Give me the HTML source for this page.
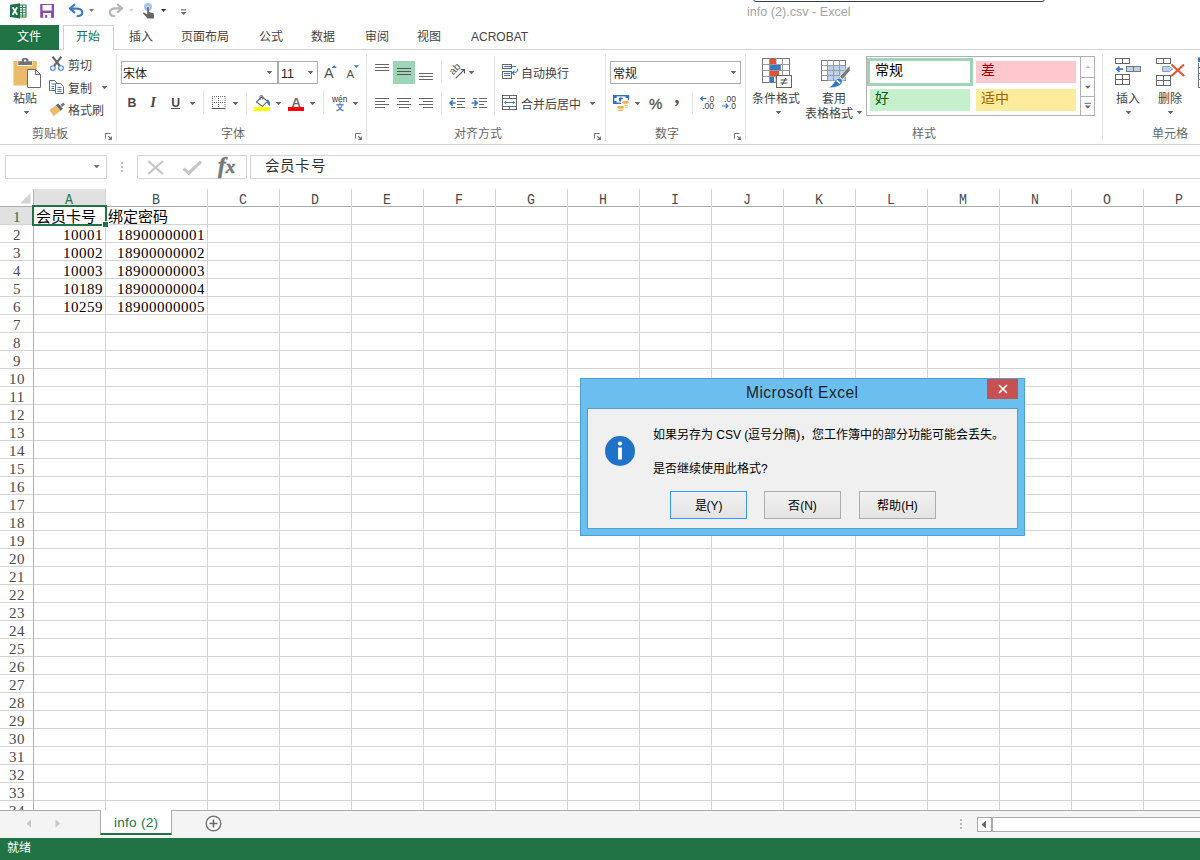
<!DOCTYPE html>
<html lang="zh-CN">
<head>
<meta charset="utf-8">
<title>Excel</title>
<style>
*{box-sizing:border-box;margin:0;padding:0}
html,body{width:1200px;height:860px;overflow:hidden;background:#fff}
body{font-family:"Liberation Sans",sans-serif;font-size:12px;color:#444;position:relative}
.a{position:absolute}
.t{position:absolute;white-space:nowrap;line-height:1}
svg{position:absolute;overflow:visible}
/* title */
#title{left:747px;top:6px;font-size:12.6px;color:#a4a4a4}
#frag{left:753px;top:-12px;width:292px;height:14px;border:1.4px solid #353e48;border-radius:0 0 3px 3px;background:#fff}
/* tabs */
#filetab{left:0;top:25px;width:59px;height:25px;background:#217346}
.tab{font-size:12px;top:31px;color:#444}
#hometab{left:63px;top:25px;width:51px;height:25px;border:1px solid #d0d0d0;border-bottom:none;background:#fff}
#ribline{left:0;top:49px;width:1200px;height:1px;background:#d4d4d4}
#ribbot{left:0;top:144px;width:1200px;height:1px;background:#d4d4d4}
.gl{font-size:12px;color:#666;top:128px}
.sep{width:1px;background:#e1e1e1;top:54px;height:87px}
.rt{font-size:12px;color:#444;margin-top:1px}
.dd{width:5.8px;height:3.3px;margin-left:-.4px;background:#666;clip-path:polygon(0 0,100% 0,50% 100%)}
.box{border:1px solid #ababab;background:#fff}
/* formula bar */
.fb{top:155px;height:24px;border:1px solid #d4d4d4;background:#fff}
/* grid */
#grid{left:0;top:186px;width:1200px;height:624px;background:#fff;overflow:hidden}
.vl{position:absolute;top:3px;width:1px;height:621px;background:#d4d4d4}
.hl{position:absolute;left:0;height:1px;width:1200px;background:#d4d4d4}
.ch{position:absolute;font-family:"Liberation Mono",monospace;font-size:15.4px;line-height:15px;color:#4a4a4a;text-align:center;transform:scaleX(.86)}
.rh{position:absolute;left:0;width:34px;font-family:"Liberation Serif",serif;font-size:15px;line-height:15px;color:#4a4a4a;text-align:center;letter-spacing:.5px}
.c{position:absolute;font-family:"Liberation Serif",serif;font-size:15px;line-height:15px;color:#000;letter-spacing:.5px;white-space:nowrap}
/* bottom */
#tabbar{left:0;top:810px;width:1200px;height:28px;background:#f4f4f4;border-top:1px solid #ababab}
#status{left:0;top:838px;width:1200px;height:22px;background:#217346}
/* dialog */
#dlg{left:580px;top:378px;width:445px;height:158px;background:#6bbfef;border:1px solid #4a9fd6}
#dlgin{left:587px;top:408px;width:431px;height:121px;background:#f0f0f0;border:1px solid #4f9fd3}
.btn{top:491px;width:77px;height:28px;border:1px solid #acacac;background:linear-gradient(#f1f1f1,#e4e4e4);font-size:12px;color:#000;text-align:center;line-height:26px;padding-top:1px}
.dt{font-size:12px;color:#000}
</style>
</head>
<body>
<!-- TITLE BAR -->
<div class="a" id="frag"></div>
<div class="t" id="title">info (2).csv - Excel</div>
<!--QAT-->
<svg style="left:0;top:0" width="200" height="25" viewBox="0 0 200 25">
<!-- excel -->
<rect x="18.5" y="5" width="7.5" height="12" fill="#fff" stroke="#217346" stroke-width="1"/>
<path d="M19 7.5H26M19 10H26M19 12.5H26M19 15H26M22.5 5V17" stroke="#217346" stroke-width="0.9" fill="none"/>
<path d="M10 4.8L20 3.2V18.6L10 17Z" fill="#1e7145"/>
<path d="M12.6 7.3L17.2 14.8M17.2 7.3L12.6 14.8" stroke="#fff" stroke-width="1.7" fill="none"/>
<!-- save -->
<rect x="40.2" y="4" width="13.8" height="13.8" fill="#8a4ab0"/>
<rect x="42.5" y="5" width="9.2" height="5.6" fill="#fff"/>
<rect x="43.2" y="13" width="7.8" height="4.8" fill="#fff"/>
<rect x="45.2" y="14.8" width="2" height="3" fill="#8a4ab0"/>
<!-- undo -->
<path d="M71.5 8.6H77.5C81.2 8.6 82.3 11 82.3 12.6C82.3 14.6 80.6 16 77.6 16.1" stroke="#3b78c4" stroke-width="2.2" fill="none" stroke-linecap="round"/>
<path d="M74.3 4.8L70 8.6L74.3 12.3" stroke="#3b78c4" stroke-width="2.2" fill="none" stroke-linecap="round" stroke-linejoin="round"/>
<path d="M89 9H94.2L91.6 11.8Z" fill="#777"/>
<!-- redo -->
<path d="M120.5 8.4H114.6C111 8.4 109.9 10.8 109.9 12.4C109.9 14.4 111.6 15.9 114.4 16" stroke="#b5b5b5" stroke-width="2.2" fill="none" stroke-linecap="round"/>
<path d="M117.8 4.6L122.1 8.4L117.8 12.1" stroke="#b5b5b5" stroke-width="2.2" fill="none" stroke-linecap="round" stroke-linejoin="round"/>
<path d="M129 9H133.8L131.4 11.6Z" fill="#c9c9c9"/>
<!-- touch -->
<circle cx="148" cy="7" r="4" fill="#a3c4e4"/><circle cx="148" cy="7.2" r="1.6" fill="#d6e4f3"/>
<path d="M147.2 7.4C147.2 6.4 148.9 6.4 148.9 7.4V12L152.6 13C153.7 13.4 154 14 154 15V18.6H147.6L143.2 13.8C142.6 13 143.6 12.2 144.5 12.8L147.2 14.6Z" fill="#666"/>
<path d="M161 9H166.2L163.6 11.9Z" fill="#333"/>
<!-- customize -->
<rect x="181" y="9.3" width="5.2" height="1.1" fill="#666"/>
<path d="M180.8 12H186.4L183.6 15.1Z" fill="#666"/>
</svg>
<!--/QAT-->
<!-- TABS -->
<div class="a" id="ribline"></div>
<div class="a" id="filetab"></div>
<div class="a" id="hometab"></div>
<div class="t tab" style="left:17px;color:#fff">文件</div>
<div class="t tab" style="left:76px;color:#217346">开始</div>
<div class="t tab" style="left:129px">插入</div>
<div class="t tab" style="left:181px">页面布局</div>
<div class="t tab" style="left:259px">公式</div>
<div class="t tab" style="left:311px">数据</div>
<div class="t tab" style="left:365px">审阅</div>
<div class="t tab" style="left:417px">视图</div>
<div class="t tab" style="left:471px">ACROBAT</div>
<!-- RIBBON -->
<div class="a" id="ribbot"></div>
<!--RIBBON-CONTENT-->
<!-- group separators -->
<div class="a sep" style="left:116px"></div>
<div class="a sep" style="left:366px"></div>
<div class="a sep" style="left:605px"></div>
<div class="a sep" style="left:745px"></div>
<div class="a sep" style="left:1102px"></div>
<!-- inner separators -->
<div class="a sep" style="left:203px;top:91px;height:23px"></div>
<div class="a sep" style="left:246px;top:91px;height:23px"></div>
<div class="a sep" style="left:323px;top:91px;height:23px"></div>
<div class="a sep" style="left:441px;top:60px;height:23px"></div>
<div class="a sep" style="left:441px;top:91px;height:23px"></div>
<div class="a sep" style="left:494px;top:56px;height:60px"></div>
<div class="a sep" style="left:692px;top:92px;height:22px"></div>
<!-- group labels -->
<div class="t gl" style="left:32px">剪贴板</div>
<div class="t gl" style="left:221px">字体</div>
<div class="t gl" style="left:454px">对齐方式</div>
<div class="t gl" style="left:655px">数字</div>
<div class="t gl" style="left:912px">样式</div>
<div class="t gl" style="left:1152px">单元格</div>
<!-- clipboard -->
<div class="t rt" style="left:13px;top:92px">粘贴</div>
<div class="t rt" style="left:68px;top:59px">剪切</div>
<div class="t rt" style="left:68px;top:82px">复制</div>
<div class="t rt" style="left:68px;top:104px">格式刷</div>
<div class="a dd" style="left:24px;top:111px"></div>
<div class="a dd" style="left:102px;top:86px"></div>
<!-- font -->
<div class="a box" style="left:121px;top:61px;width:157px;height:23px"></div>
<div class="a box" style="left:278px;top:61px;width:40px;height:23px"></div>
<div class="t rt" style="left:123px;top:67px;color:#222">宋体</div>
<div class="t rt" style="left:281px;top:67px;color:#222;font-size:12.5px">11</div>
<div class="a dd" style="left:267px;top:71px"></div>
<div class="a dd" style="left:308px;top:71px"></div>
<div class="t" style="left:324px;top:66px;font-size:14.4px;color:#505050">A</div>
<div class="t" style="left:346.6px;top:68.6px;font-size:11.4px;color:#505050">A</div>
<div class="t" style="left:127.4px;top:96.9px;font-size:12.3px;font-weight:bold;color:#4a4a4a">B</div>
<div class="t" style="left:150.2px;top:95.3px;font-size:14.6px;font-weight:bold;font-style:italic;color:#4a4a4a;font-family:'Liberation Serif',serif">I</div>
<div class="t" style="left:171.2px;top:96.9px;font-size:12.3px;font-weight:bold;color:#4a4a4a">U</div>
<div class="a" style="left:171px;top:108px;width:9px;height:1px;background:#555"></div>
<div class="a dd" style="left:190px;top:102px"></div>
<div class="a dd" style="left:233px;top:102px"></div>
<div class="a dd" style="left:276px;top:102px"></div>
<div class="a dd" style="left:310px;top:102px"></div>
<div class="a dd" style="left:353px;top:102px"></div>
<div class="a" style="left:254px;top:107px;width:16px;height:4px;background:#ffff00"></div>
<div class="a" style="left:288px;top:107px;width:16px;height:4px;background:#ff0000"></div>
<div class="t" style="left:291.6px;top:95.6px;font-size:13px;font-weight:bold;color:#6a6a6a">A</div>
<div class="t" style="left:332px;top:95px;font-size:8.4px;color:#333">wén</div>
<div class="t" style="left:336px;top:103.6px;font-size:7.8px;color:#3b78c4;font-weight:bold">文</div>
<!-- alignment -->
<div class="a" style="left:393px;top:61px;width:22px;height:23px;background:#9fd5b7"></div>
<div class="t rt" style="left:521px;top:67px">自动换行</div>
<div class="t rt" style="left:521px;top:98px">合并后居中</div>
<div class="a dd" style="left:469px;top:71px"></div>
<div class="a dd" style="left:590px;top:102px"></div>
<!-- number -->
<div class="a box" style="left:610px;top:61px;width:131px;height:23px"></div>
<div class="t rt" style="left:613px;top:67px;color:#222">常规</div>
<div class="a dd" style="left:731px;top:71px"></div>
<div class="a dd" style="left:635px;top:102px"></div>
<div class="t" style="left:649px;top:96px;font-size:15px;color:#555;-webkit-text-stroke:.35px #555">%</div>
<div class="t" style="left:674.4px;top:85.6px;font-size:20px;font-weight:bold;color:#555;font-family:'Liberation Serif',serif">,</div>
<!-- styles -->
<div class="t rt" style="left:752px;top:92px">条件格式</div>
<div class="a dd" style="left:776px;top:111px"></div>
<div class="t rt" style="left:822px;top:92px">套用</div>
<div class="t rt" style="left:805px;top:107px">表格格式</div>
<div class="a dd" style="left:857px;top:111px"></div>
<div class="a" style="left:866px;top:56px;width:229px;height:60px;border:1px solid #b0b0b0;background:#fff"></div>
<div class="a" style="left:867px;top:58px;width:106px;height:28px;border:3px solid #9fd5b7;background:#fff"></div>
<div class="a" style="left:976px;top:61px;width:100px;height:22px;background:#ffc7ce"></div>
<div class="a" style="left:870px;top:89px;width:100px;height:22px;background:#c6efce"></div>
<div class="a" style="left:976px;top:89px;width:100px;height:22px;background:#ffeb9c"></div>
<div class="t" style="left:875px;top:63px;font-size:14px;color:#000">常规</div>
<div class="t" style="left:981px;top:63px;font-size:14px;color:#9c0006">差</div>
<div class="t" style="left:875px;top:91px;font-size:14px;color:#006100">好</div>
<div class="t" style="left:981px;top:91px;font-size:14px;color:#9c6500">适中</div>
<div class="a" style="left:1080px;top:56px;width:15px;height:60px;border:1px solid #b0b0b0;background:#fff"></div>
<div class="a" style="left:1080px;top:77px;width:15px;height:20px;border:1px solid #b0b0b0;border-left:none;border-right:none"></div>
<!-- cells -->
<div class="t rt" style="left:1116px;top:92px">插入</div>
<div class="t rt" style="left:1158px;top:92px">删除</div>
<div class="a dd" style="left:1126px;top:111px"></div>
<div class="a dd" style="left:1168px;top:111px"></div>
<!-- icons -->
<svg id="ico" style="left:0;top:0" width="1200" height="150" viewBox="0 0 1200 150">
<!--ICONS-->
<g id="paste">
<rect x="13.4" y="61" width="23.5" height="24.6" rx="0.8" fill="#eabb6b"/>
<rect x="17.6" y="60.6" width="14.8" height="5.4" fill="#fff"/>
<path d="M18.2 65V61.2H21.8V59.6C21.8 58.5 23 58 25.1 58C27.2 58 28.4 58.5 28.4 59.6V61.2H32V65Z" fill="#737373"/>
<rect x="24" y="59.7" width="2.2" height="1.9" fill="#fff"/>
<path d="M27.5 69.5H35.5L40.5 74.5V87.5H27.5Z" fill="#fff" stroke="#6a6a6a" stroke-width="1"/>
<path d="M35.5 69.5V74.5H40.5" fill="none" stroke="#6a6a6a" stroke-width="1"/>
</g>
<g id="cut">
<path d="M52.5 56.6L59.9 66M61.4 56.6L54 66" stroke="#666" stroke-width="2.2" fill="none"/>
<circle cx="52.9" cy="68" r="2.3" fill="#fff" stroke="#4a86cf" stroke-width="1.15"/>
<circle cx="61" cy="68" r="2.3" fill="#fff" stroke="#4a86cf" stroke-width="1.15"/>
</g>
<g id="copy">
<path d="M49.5 80.5H54.5L57.5 83.5V90.5H49.5Z" fill="#fff" stroke="#6a6a6a" stroke-width="1"/>
<path d="M51.5 84H55M51.5 86.5H54M51.5 88.5H54" stroke="#3b78c4" stroke-width="1" fill="none"/>
<path d="M55.5 83.5H60.5L63.5 86.5V93.5H55.5Z" fill="#fff" stroke="#6a6a6a" stroke-width="1"/>
<path d="M57.5 87.5H61.5M57.5 89.5H61.5M57.5 91.5H61.5" stroke="#3b78c4" stroke-width="1" fill="none"/>
</g>
<g id="painter">
<path d="M49.5 110L55.5 105.5L60.5 111L53.5 116Z" fill="#eabb6b"/>
<path d="M55.8 105.2L58.2 103.4L63 108.8L60.6 110.8Z" fill="#666"/>
<path d="M60.3 105L63.3 102.6L65 104.4L62 107Z" fill="#7a7a7a"/>
</g>
<g id="launchers">
<path d="M105.5 138.6V133.5H110.6" fill="none" stroke="#6e6e6e" stroke-width="1"/><path d="M111.9 136.1V139.9H108.1Z" fill="#6e6e6e" stroke="none"/><path d="M108.2 136.2L110 138" stroke="#6e6e6e" stroke-width="1.1" fill="none"/>
<path d="M355.5 138.6V133.5H360.6" fill="none" stroke="#6e6e6e" stroke-width="1"/><path d="M361.9 136.1V139.9H358.1Z" fill="#6e6e6e" stroke="none"/><path d="M358.2 136.2L360 138" stroke="#6e6e6e" stroke-width="1.1" fill="none"/>
<path d="M594.5 138.6V133.5H599.6" fill="none" stroke="#6e6e6e" stroke-width="1"/><path d="M600.9 136.1V139.9H597.1Z" fill="#6e6e6e" stroke="none"/><path d="M597.2 136.2L599 138" stroke="#6e6e6e" stroke-width="1.1" fill="none"/>
<path d="M734.5 138.6V133.5H739.6" fill="none" stroke="#6e6e6e" stroke-width="1"/><path d="M740.9 136.1V139.9H737.1Z" fill="#6e6e6e" stroke="none"/><path d="M737.2 136.2L739 138" stroke="#6e6e6e" stroke-width="1.1" fill="none"/>
</g>
<g id="growshrink" fill="#3b78c4">
<path d="M331.6 68L334.2 65.2L336.8 68Z"/>
<path d="M353.8 65.2H359L356.4 68Z"/>
</g>
<g id="border" stroke="#666" stroke-width="1" fill="none">
<path d="M212 96.5H225.5M212 102.5H225.5" stroke-dasharray="1 1"/>
<path d="M212.5 96V108M218.5 96V108M225 96V108" stroke-dasharray="1 1"/>
<path d="M211.8 108.5H225.5" stroke="#555"/>
</g>
<g id="fill">
<path d="M256.4 102L261.6 96.8L267.8 101.2L262.4 106.4Z" fill="#fff" stroke="#666" stroke-width="1.1" stroke-linejoin="round"/>
<path d="M260 100V96.2C260 95.2 262.8 95.2 262.8 96.2V99.6" fill="none" stroke="#666" stroke-width="1"/>
<path d="M267.4 99.2C269.6 100.4 270.3 102.6 270 106C268.4 104.8 267.2 103.6 267 102.2Z" fill="#3b78c4"/>
</g>
<g id="aligns" stroke="#666" stroke-width="1" fill="none">
<path d="M375 64.5H389M375 67.5H389M375 70.5H389"/>
<path d="M397 68.5H411M397 71.5H411M397 74.5H411" stroke="#555"/>
<path d="M419 73.5H433M419 76.5H433M419 79.5H433"/>
<path d="M375 98.5H389M375 101.5H385M375 104.5H389M375 107.5H385"/>
<path d="M397 98.5H411M399 101.5H409M397 104.5H411M399 107.5H409"/>
<path d="M419 98.5H433M423 101.5H433M419 104.5H433M423 107.5H433"/>
<path d="M451 98.5H455M457 98.5H465M457 101.5H465M457 104.5H462M451 107.5H455M457 107.5H465"/>
<path d="M473 98.5H477M479 98.5H487M479 101.5H487M479 104.5H484M473 107.5H477M479 107.5H487"/>
</g>
<g id="indentarrows" stroke="#3b78c4" stroke-width="1.6" fill="none">
<path d="M455.6 103H450.2M452.8 100.4L450 103L452.8 105.6"/>
<path d="M471.6 103H477M474.4 100.4L477.2 103L474.4 105.6"/>
</g>
<g id="orient">
<text x="0" y="0" transform="translate(453.2 75.6) rotate(-47)" font-family="Liberation Sans, sans-serif" font-size="10.5" fill="#555">ab</text>
<path d="M455.6 78.3L464.2 69.8M460.6 69.6H464.5V73.4" stroke="#555" stroke-width="1.1" fill="none"/>
</g>
<g id="wrap" fill="none">
<rect x="502.5" y="64.5" width="9" height="4" stroke="#666"/>
<path d="M504 66.5H516" stroke="#3b78c4"/>
<rect x="502.5" y="71.5" width="9" height="7" stroke="#666" fill="#fff"/>
<path d="M504 73.5H510M504 75.5H510" stroke="#3b78c4"/>
<path d="M517.5 68.6C517.8 71.6 516.4 72.8 512.6 72.8M514.6 70.6L512.4 72.8L514.6 75" stroke="#3b78c4" stroke-width="1.1"/>
</g>
<g id="merge" fill="none">
<rect x="502.5" y="95.5" width="14" height="14" stroke="#666"/>
<path d="M502.5 98.5H516.5M502.5 106.5H516.5M509.5 95.5V98.5M509.5 106.5V109.5" stroke="#666"/>
<path d="M504.6 102.5H514.4M506.2 101L504.6 102.5L506.2 104M512.8 101L514.4 102.5L512.8 104" stroke="#3b78c4" stroke-width="1"/>
</g>
<g id="currency">
<rect x="613.7" y="95.7" width="14.8" height="7.6" fill="#fff" stroke="#2f6fbd" stroke-width="1.4"/>
<rect x="614" y="96" width="2.6" height="2" fill="#2f6fbd"/><rect x="625.6" y="96" width="2.6" height="2" fill="#2f6fbd"/><rect x="614" y="101" width="2.6" height="2" fill="#2f6fbd"/>
<circle cx="620.9" cy="99.4" r="2.25" fill="#2f6fbd"/>
<path d="M621.2 99.2L623.6 99.2L623.6 102L621.2 102Z" fill="#fff"/>
<rect x="621.2" y="100.2" width="8.6" height="4.2" fill="#fff"/>
<rect x="622.2" y="101" width="6.6" height="2.7" rx="1.35" fill="#eeb350"/>
<rect x="624.3" y="105" width="3.7" height=".8" fill="#d8ba55"/>
<rect x="624.6" y="107" width="3.4" height=".8" fill="#d8ba55"/>
<rect x="617" y="106" width="6.8" height="2.7" rx="1.35" fill="#eeb350"/>
<rect x="617.6" y="109.2" width="6" height=".6" fill="#e6c680"/>
<rect x="618" y="110.1" width="4.8" height=".9" fill="#eeb350"/>
</g>
<g id="decimals" font-family="Liberation Sans, sans-serif" font-size="8.6" fill="#3c3c3c">
<text x="707" y="101.7">.0</text>
<text x="702.2" y="109.1">.00</text>
<text x="724" y="101.7">.00</text>
<text x="728.9" y="109.1">.0</text>
<path d="M706.4 98.6H700.8M703 96.4L700.6 98.6L703 100.8" stroke="#3b78c4" stroke-width="1.2" fill="none"/>
<path d="M722 106H727.8M725.6 103.8L728 106L725.6 108.2" stroke="#3b78c4" stroke-width="1.2" fill="none"/>
</g>
<g id="condfmt">
<rect x="762.5" y="58.5" width="27" height="24" fill="#fff" stroke="#777"/>
<path d="M769.5 58.5V82.5M776 58.5V82.5M782.5 58.5V82.5M762.5 64.5H789.5M762.5 70.5H789.5M762.5 76.5H789.5" stroke="#9a9a9a" fill="none"/>
<rect x="770" y="59" width="6" height="5" fill="#e0532f"/>
<rect x="770" y="65" width="10.8" height="5" fill="#3b78c4"/>
<rect x="770" y="71" width="9" height="5" fill="#e0532f"/>
<rect x="770" y="77" width="4" height="5" fill="#3b78c4"/>
<rect x="776.5" y="75.5" width="15" height="12" fill="#fff" stroke="#666"/>
<path d="M780.6 80H787.4M780.6 83H787.4M786 78L782 85" stroke="#444" stroke-width="1" fill="none"/>
</g>
<g id="tblfmt">
<rect x="821.5" y="60.5" width="24" height="20" fill="#fff" stroke="#777"/>
<rect x="828" y="66" width="17.5" height="14.5" fill="#b9d3ee"/>
<path d="M827.5 60.5V80.5M833.5 60.5V80.5M839.5 60.5V80.5M821.5 65.5H845.5M821.5 70.5H845.5M821.5 75.5H845.5" stroke="#9a9a9a" fill="none"/>
<path d="M850 65.6L850.2 70.6L842.6 79.4L839.6 76.8L847.6 67.6Z" fill="#777" stroke="#fff" stroke-width=".8"/>
<path d="M839.2 78.2C841.4 78.2 842.8 80.2 842.2 82.2C841.2 85.6 837 87.8 828 87.8C832.4 86 833.8 82.4 835.4 80.2C836.4 78.8 837.8 78.2 839.2 78.2Z" fill="#3b78c4" stroke="#fff" stroke-width=".6"/>
<path d="M836.6 80.4L840.2 83.4" stroke="#fff" stroke-width="1.4"/>
</g>
<g id="galleryarrows">
<path d="M1085 68L1087.8 65.2L1090.6 68Z" fill="#c8c8c8"/>
<path d="M1085 85.8H1090.6L1087.8 88.8Z" fill="#666"/>
<rect x="1084.6" y="102.8" width="6.4" height="1" fill="#666"/>
<path d="M1085 105.6H1090.6L1087.8 108.8Z" fill="#666"/>
</g>
<g id="insert" fill="none">
<rect x="1115.5" y="58.5" width="14" height="5" stroke="#666"/>
<path d="M1122.5 58.5V63.5" stroke="#666"/>
<rect x="1126.5" y="66.5" width="14" height="5" fill="#b9d3ee" stroke="#777"/>
<path d="M1133.5 66.5V71.5" stroke="#777"/>
<path d="M1123 69.2H1117M1119.6 66.6L1116.8 69.2L1119.6 71.8" stroke="#3b78c4" stroke-width="1.8"/>
<rect x="1115.5" y="74.5" width="14" height="10" stroke="#666"/>
<path d="M1122.5 74.5V84.5M1115.5 79.5H1129.5" stroke="#666"/>
</g>
<g id="delete" fill="none">
<rect x="1156.5" y="58.5" width="14" height="5" stroke="#666"/>
<path d="M1163.5 58.5V63.5" stroke="#666"/>
<path d="M1162.5 66.5H1169.5L1172.5 69L1169.5 71.5H1162.5Z" fill="#b9d3ee" stroke="#8a9db4"/>
<rect x="1156.5" y="75.5" width="14" height="10" stroke="#666"/>
<path d="M1163.5 75.5V85.5M1156.5 80.5H1170.5" stroke="#666"/>
<path d="M1171.4 64.4L1184.2 76M1184 64.6L1171.2 76.2" stroke="#e0532f" stroke-width="2"/>
</g>
<g id="partial">
<rect x="1198" y="57.5" width="2" height="4.5" fill="#3b78c4"/>
<path d="M1198.5 63V88M1198.5 67.5H1200M1198.5 73.5H1200M1198.5 79.5H1200M1198.5 87.5H1200" stroke="#777" fill="none"/>
</g>
<!--/ICONS-->
</svg>
<!--/RIBBON-CONTENT-->
<!-- FORMULA BAR -->
<!--FORMULA-->
<div class="a fb" style="left:5px;width:102px"></div>
<div class="a dd" style="left:93.6px;top:164.6px;width:7px;height:3.8px;background:#777"></div>
<div class="a" style="left:121px;top:162px;width:2px;height:2px;background:#bbb;box-shadow:0 4px 0 #bbb,0 8px 0 #bbb"></div>
<div class="a fb" style="left:137px;width:110px"></div>
<svg style="left:147px;top:160px" width="18" height="15" viewBox="0 0 18 15"><path d="M1.2 1L16 14M16 1L1.2 14" stroke="#c6c6c6" stroke-width="2.3" fill="none"/></svg>
<svg style="left:182px;top:160px" width="20" height="15" viewBox="0 0 20 15"><path d="M1.5 8.6L6.8 13.2L19 1.6" stroke="#c6c6c6" stroke-width="3.2" fill="none"/></svg>
<div class="t" style="left:218px;top:154px;font-family:'Liberation Serif',serif;font-style:italic;font-weight:bold;font-size:23px;color:#777;-webkit-text-stroke:.5px #777;letter-spacing:0">f<span style="font-size:19px;letter-spacing:0">x</span></div>
<div class="a fb" style="left:250px;width:960px"></div>
<div class="t" style="left:265px;top:159px;font-size:14.6px;color:#333;letter-spacing:0.2px">会员卡号</div>
<!--/FORMULA-->
<!-- GRID -->
<div class="a" id="grid">
<!--GRID-CONTENT-->
<div class="a" style="left:34px;top:3px;width:71px;height:17px;background:#e1e1e1"></div>
<div class="a" style="left:0;top:21px;width:33px;height:17px;background:#e1e1e1"></div>
<div class="hl" style="top:20px;background:#ababab"></div>
<div class="hl" style="top:38px;background:#d4d4d4"></div>
<div class="hl" style="top:56px;background:#d4d4d4"></div>
<div class="hl" style="top:74px;background:#d4d4d4"></div>
<div class="hl" style="top:92px;background:#d4d4d4"></div>
<div class="hl" style="top:110px;background:#d4d4d4"></div>
<div class="hl" style="top:128px;background:#d4d4d4"></div>
<div class="hl" style="top:146px;background:#d4d4d4"></div>
<div class="hl" style="top:164px;background:#d4d4d4"></div>
<div class="hl" style="top:182px;background:#d4d4d4"></div>
<div class="hl" style="top:200px;background:#d4d4d4"></div>
<div class="hl" style="top:218px;background:#d4d4d4"></div>
<div class="hl" style="top:236px;background:#d4d4d4"></div>
<div class="hl" style="top:254px;background:#d4d4d4"></div>
<div class="hl" style="top:272px;background:#d4d4d4"></div>
<div class="hl" style="top:290px;background:#d4d4d4"></div>
<div class="hl" style="top:308px;background:#d4d4d4"></div>
<div class="hl" style="top:326px;background:#d4d4d4"></div>
<div class="hl" style="top:344px;background:#d4d4d4"></div>
<div class="hl" style="top:362px;background:#d4d4d4"></div>
<div class="hl" style="top:380px;background:#d4d4d4"></div>
<div class="hl" style="top:398px;background:#d4d4d4"></div>
<div class="hl" style="top:416px;background:#d4d4d4"></div>
<div class="hl" style="top:434px;background:#d4d4d4"></div>
<div class="hl" style="top:452px;background:#d4d4d4"></div>
<div class="hl" style="top:470px;background:#d4d4d4"></div>
<div class="hl" style="top:488px;background:#d4d4d4"></div>
<div class="hl" style="top:506px;background:#d4d4d4"></div>
<div class="hl" style="top:524px;background:#d4d4d4"></div>
<div class="hl" style="top:542px;background:#d4d4d4"></div>
<div class="hl" style="top:560px;background:#d4d4d4"></div>
<div class="hl" style="top:578px;background:#d4d4d4"></div>
<div class="hl" style="top:596px;background:#d4d4d4"></div>
<div class="hl" style="top:614px;background:#d4d4d4"></div>
<div class="vl" style="left:33px;background:#b4b4b4"></div>
<div class="vl" style="left:105px;background:#d4d4d4"></div>
<div class="vl" style="left:207px;background:#d4d4d4"></div>
<div class="vl" style="left:279px;background:#d4d4d4"></div>
<div class="vl" style="left:351px;background:#d4d4d4"></div>
<div class="vl" style="left:423px;background:#d4d4d4"></div>
<div class="vl" style="left:495px;background:#d4d4d4"></div>
<div class="vl" style="left:567px;background:#d4d4d4"></div>
<div class="vl" style="left:639px;background:#d4d4d4"></div>
<div class="vl" style="left:711px;background:#d4d4d4"></div>
<div class="vl" style="left:783px;background:#d4d4d4"></div>
<div class="vl" style="left:855px;background:#d4d4d4"></div>
<div class="vl" style="left:927px;background:#d4d4d4"></div>
<div class="vl" style="left:999px;background:#d4d4d4"></div>
<div class="vl" style="left:1071px;background:#d4d4d4"></div>
<div class="vl" style="left:1143px;background:#d4d4d4"></div>
<div class="ch" style="left:33px;top:7px;width:72px;color:#217346;">A</div>
<div class="ch" style="left:105px;top:7px;width:102px;">B</div>
<div class="ch" style="left:207px;top:7px;width:72px;">C</div>
<div class="ch" style="left:279px;top:7px;width:72px;">D</div>
<div class="ch" style="left:351px;top:7px;width:72px;">E</div>
<div class="ch" style="left:423px;top:7px;width:72px;">F</div>
<div class="ch" style="left:495px;top:7px;width:72px;">G</div>
<div class="ch" style="left:567px;top:7px;width:72px;">H</div>
<div class="ch" style="left:639px;top:7px;width:72px;">I</div>
<div class="ch" style="left:711px;top:7px;width:72px;">J</div>
<div class="ch" style="left:783px;top:7px;width:72px;">K</div>
<div class="ch" style="left:855px;top:7px;width:72px;">L</div>
<div class="ch" style="left:927px;top:7px;width:72px;">M</div>
<div class="ch" style="left:999px;top:7px;width:72px;">N</div>
<div class="ch" style="left:1071px;top:7px;width:72px;">O</div>
<div class="ch" style="left:1143px;top:7px;width:72px;">P</div>
<div class="rh" style="top:24px;color:#217346;">1</div>
<div class="rh" style="top:42px;">2</div>
<div class="rh" style="top:60px;">3</div>
<div class="rh" style="top:78px;">4</div>
<div class="rh" style="top:96px;">5</div>
<div class="rh" style="top:114px;">6</div>
<div class="rh" style="top:132px;">7</div>
<div class="rh" style="top:150px;">8</div>
<div class="rh" style="top:168px;">9</div>
<div class="rh" style="top:186px;">10</div>
<div class="rh" style="top:204px;">11</div>
<div class="rh" style="top:222px;">12</div>
<div class="rh" style="top:240px;">13</div>
<div class="rh" style="top:258px;">14</div>
<div class="rh" style="top:276px;">15</div>
<div class="rh" style="top:294px;">16</div>
<div class="rh" style="top:312px;">17</div>
<div class="rh" style="top:330px;">18</div>
<div class="rh" style="top:348px;">19</div>
<div class="rh" style="top:366px;">20</div>
<div class="rh" style="top:384px;">21</div>
<div class="rh" style="top:402px;">22</div>
<div class="rh" style="top:420px;">23</div>
<div class="rh" style="top:438px;">24</div>
<div class="rh" style="top:456px;">25</div>
<div class="rh" style="top:474px;">26</div>
<div class="rh" style="top:492px;">27</div>
<div class="rh" style="top:510px;">28</div>
<div class="rh" style="top:528px;">29</div>
<div class="rh" style="top:546px;">30</div>
<div class="rh" style="top:564px;">31</div>
<div class="rh" style="top:582px;">32</div>
<div class="rh" style="top:600px;">33</div>
<div class="rh" style="top:618px;">34</div>
<div class="c" style="left:36px;top:24px;letter-spacing:0">会员卡号</div>
<div class="c" style="left:108px;top:24px;letter-spacing:0">绑定密码</div>
<div class="c" style="left:34px;width:69px;text-align:right;top:42px">10001</div>
<div class="c" style="left:106px;width:99px;text-align:right;top:42px">18900000001</div>
<div class="c" style="left:34px;width:69px;text-align:right;top:60px">10002</div>
<div class="c" style="left:106px;width:99px;text-align:right;top:60px">18900000002</div>
<div class="c" style="left:34px;width:69px;text-align:right;top:78px">10003</div>
<div class="c" style="left:106px;width:99px;text-align:right;top:78px">18900000003</div>
<div class="c" style="left:34px;width:69px;text-align:right;top:96px">10189</div>
<div class="c" style="left:106px;width:99px;text-align:right;top:96px">18900000004</div>
<div class="c" style="left:34px;width:69px;text-align:right;top:114px">10259</div>
<div class="c" style="left:106px;width:99px;text-align:right;top:114px">18900000005</div>
<div class="a" style="left:32px;top:19px;width:75px;height:21px;border:2px solid #217346"></div>
<div class="a" style="left:102px;top:35px;width:7px;height:7px;background:#217346;border:1px solid #fff"></div>
<svg style="left:20px;top:7px" width="11" height="11"><path d="M10.5 0V10.5H0Z" fill="#d4d4d4"/></svg>
</div>
<!-- BOTTOM -->
<div class="a" id="tabbar"></div>
<!--TABBAR-CONTENT-->
<svg style="left:26px;top:819px" width="6" height="9"><path d="M5 0.5V8.5L0.5 4.5Z" fill="#c6c6c6"/></svg>
<svg style="left:55px;top:819px" width="6" height="9"><path d="M0.5 0.5V8.5L5 4.5Z" fill="#c6c6c6"/></svg>
<div class="a" style="left:100px;top:810px;width:72px;height:25px;background:#fff;border-left:1px solid #ababab;border-right:1px solid #ababab;border-bottom:2px solid #217346"></div>
<div class="t" style="left:114px;top:816px;font-size:13.6px;color:#217346;letter-spacing:.25px">info (2)</div>
<svg style="left:204.5px;top:815.2px" width="17" height="17" viewBox="0 0 17 17"><circle cx="8.5" cy="8.5" r="7.3" fill="#fff" stroke="#777" stroke-width="1.5"/><path d="M4.5 8.5H12.5M8.5 4.5V12.5" stroke="#666" stroke-width="1.6"/></svg>
<div class="a" style="left:960px;top:819px;width:2px;height:2px;background:#bbb;box-shadow:0 4px 0 #bbb,0 8px 0 #bbb"></div>
<div class="a" style="left:977px;top:817px;width:230px;height:15px;border:1px solid #ababab;background:#fff"></div>
<div class="a" style="left:991px;top:817px;width:2px;height:15px;background:#ababab"></div>
<svg style="left:981px;top:820px" width="6" height="9"><path d="M5 0.5V8.5L0.5 4.5Z" fill="#666"/></svg>
<!--/TABBAR-CONTENT-->
<div class="a" id="status"></div>
<div class="t" style="left:7px;top:842px;font-size:12px;color:#fff">就绪</div>
<!-- DIALOG -->
<div class="a" id="dlg"></div>
<div class="a" id="dlgin"></div>
<!--DIALOG-CONTENT-->
<div class="t" style="left:746px;top:385px;font-size:15.6px;color:#1e1e1e;letter-spacing:.45px">Microsoft Excel</div>
<div class="a" style="left:987px;top:379px;width:31px;height:20px;background:#c75050"></div>
<svg style="left:998px;top:384px" width="10" height="10" viewBox="0 0 10 10"><path d="M1 1L9 9M9 1L1 9" stroke="#fff" stroke-width="1.6"/></svg>
<svg style="left:605px;top:436px" width="30" height="30" viewBox="0 0 30 30"><circle cx="15" cy="15" r="15" fill="#1e73c8"/><circle cx="15" cy="7.6" r="2.1" fill="#fff"/><rect x="13.1" y="11.5" width="3.8" height="12" fill="#fff"/></svg>
<div class="t dt" style="left:653px;top:429px">如果另存为 CSV (逗号分隔)，您工作簿中的部分功能可能会丢失。</div>
<div class="t dt" style="left:653px;top:463px">是否继续使用此格式?</div>
<div class="a btn" style="left:670px;border-color:#3399ff">是(Y)</div>
<div class="a btn" style="left:764px">否(N)</div>
<div class="a btn" style="left:859px">帮助(H)</div>
<!--/DIALOG-CONTENT-->
</body>
</html>
